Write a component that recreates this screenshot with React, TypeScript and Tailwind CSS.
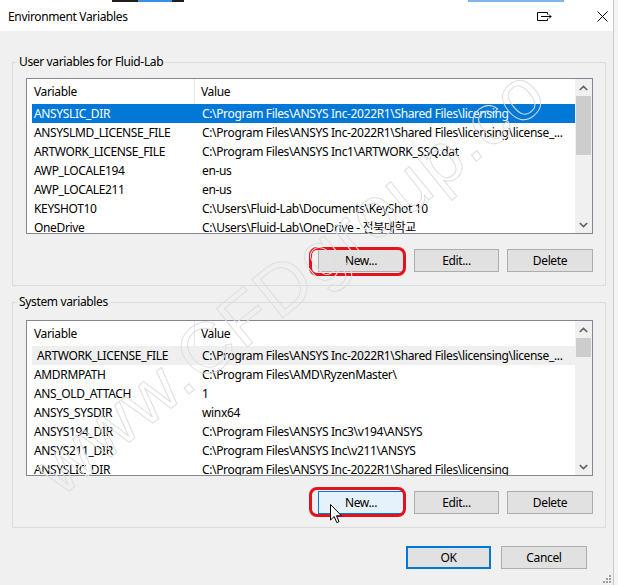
import React from "react";

type Row = { name: string; value: string };

const userRows: Row[] = [
  { name: "ANSYSLIC_DIR", value: "C:\\Program Files\\ANSYS Inc-2022R1\\Shared Files\\licensing" },
  { name: "ANSYSLMD_LICENSE_FILE", value: "C:\\Program Files\\ANSYS Inc-2022R1\\Shared Files\\licensing\\license_..." },
  { name: "ARTWORK_LICENSE_FILE", value: "C:\\Program Files\\ANSYS Inc1\\ARTWORK_SSQ.dat" },
  { name: "AWP_LOCALE194", value: "en-us" },
  { name: "AWP_LOCALE211", value: "en-us" },
  { name: "KEYSHOT10", value: "C:\\Users\\Fluid-Lab\\Documents\\KeyShot 10" },
  { name: "OneDrive", value: "C:\\Users\\Fluid-Lab\\OneDrive - 전북대학교" },
];

const systemRows: Row[] = [
  { name: "ARTWORK_LICENSE_FILE", value: "C:\\Program Files\\ANSYS Inc-2022R1\\Shared Files\\licensing\\license_..." },
  { name: "AMDRMPATH", value: "C:\\Program Files\\AMD\\RyzenMaster\\" },
  { name: "ANS_OLD_ATTACH", value: "1" },
  { name: "ANSYS_SYSDIR", value: "winx64" },
  { name: "ANSYS194_DIR", value: "C:\\Program Files\\ANSYS Inc3\\v194\\ANSYS" },
  { name: "ANSYS211_DIR", value: "C:\\Program Files\\ANSYS Inc\\v211\\ANSYS" },
  { name: "ANSYSLIC_DIR", value: "C:\\Program Files\\ANSYS Inc-2022R1\\Shared Files\\licensing" },
];

const Chevron = ({ down }: { down?: boolean }) => (
  <svg width="9" height="6" viewBox="0 0 9 6">
    <polyline
      points={down ? "0.8,1 4.5,4.6 8.2,1" : "0.8,5 4.5,1.4 8.2,5"}
      fill="none"
      stroke="#606060"
      strokeWidth="1.6"
    />
  </svg>
);

const VarList = ({
  rows,
  mode,
  thumbHeight,
}: {
  rows: Row[];
  mode: "user" | "system";
  thumbHeight: number;
}) => (
  <div className="flex h-[156px] min-w-0 border border-[#828790] bg-white">
    <div className="min-w-0 flex-1 overflow-hidden">
      <div className="flex h-[25px] items-center">
        <div className="w-[168px] shrink-0 border-r border-[#e5e5e5] pl-[7px] leading-[25px]">Variable</div>
        <div className="pl-[6px]">Value</div>
      </div>
      {rows.map((r, i) => {
        const selected = mode === "user" && i === 0;
        const focused = mode === "system" && i === 0;
        return (
          <div
            key={r.name}
            className={`ml-[5px] flex h-[19px] items-center whitespace-nowrap ${
              selected ? "bg-[#0078d7] text-white" : focused ? "bg-[#efefef]" : ""
            }`}
          >
            <div className={`w-[168px] shrink-0 ${focused ? "pl-[5px]" : "pl-[2px]"}`}>{r.name}</div>
            <div className="pl-[2px]">{r.value}</div>
          </div>
        );
      })}
    </div>
    <div className="flex w-[17px] shrink-0 flex-col bg-[#f0f0f0]">
      <div className="flex h-[17px] items-center justify-center">
        <Chevron />
      </div>
      <div className="mx-[1px] bg-[#cdcdcd]" style={{ height: thumbHeight }} />
      <div className="flex-1" />
      <div className="flex h-[17px] items-center justify-center">
        <Chevron down />
      </div>
    </div>
  </div>
);

const Btn = ({
  label,
  w,
  hover,
  isDefault,
}: {
  label: string;
  w: string;
  hover?: boolean;
  isDefault?: boolean;
}) => (
  <div
    className={`flex h-[23px] items-center justify-center ${w} ${
      hover
        ? "border border-[#0078d7] bg-[#e5f1fb]"
        : isDefault
        ? "border-2 border-[#0078d7] bg-[#e1e1e1]"
        : "border border-[#adadad] bg-[#e1e1e1]"
    }`}
  >
    {label}
  </div>
);

const Cursor = () => (
  <svg width="13" height="20" viewBox="0 0 13 20">
    <path
      d="M0.5 0.5 L0.5 16 L4.2 12.6 L6.8 18.6 L9 17.6 L6.5 11.8 L11.5 11.8 Z"
      fill="white"
      stroke="black"
      strokeWidth="1"
      strokeLinejoin="miter"
    />
  </svg>
);

const Group = ({
  title,
  rows,
  mode,
  thumbHeight,
  listTop,
  ringTop,
  ringBottom,
}: {
  title: string;
  rows: Row[];
  mode: "user" | "system";
  thumbHeight: number;
  listTop: string;
  ringTop: string;
  ringBottom: string;
}) => (
  <fieldset className="w-[594px] min-w-0 border border-[#dcdcdc] p-0">
    <legend className="ml-[4px] px-[2px] leading-[16px]">{title}</legend>
    <div className={`pl-[13px] pr-[12px] pb-[13px] ${listTop}`}>
      <VarList rows={rows} mode={mode} thumbHeight={thumbHeight} />
      <div className="mt-[15px] flex justify-end">
        <div className="relative">
          <Btn label="New..." w="w-[86px]" hover={mode === "system"} />
          <div
            className={`pointer-events-none absolute left-[-9px] right-[-2px] rounded-[8px] border-[3px] border-[#e5111b] ${ringTop} ${ringBottom}`}
          />
          {mode === "system" && (
            <div className="pointer-events-none absolute left-[12px] top-[13px]">
              <Cursor />
            </div>
          )}
        </div>
        <div className="ml-[10px]">
          <Btn label="Edit..." w="w-[85px]" />
        </div>
        <div className="ml-[8px]">
          <Btn label="Delete" w="w-[86px]" />
        </div>
      </div>
    </div>
  </fieldset>
);

export default function App() {
  return (
    <div className="flex h-[585px] w-[618px] overflow-hidden bg-white font-['Noto_Sans','Noto_Sans_CJK_KR',sans-serif] text-[12px] tracking-[-0.35px] text-black">
      <div className="relative flex w-[614px] shrink-0 flex-col border-r border-[#c8c8c8]">
        {/* strip of the window behind */}
        <div className="flex h-[2px]">
          <div className="w-[112px]" />
          <div className="w-[26px] bg-[#1f1f1f]" />
          <div className="w-[34px] bg-[#3a8ee6]" />
          <div className="w-[12px] bg-[#1f1f1f]" />
          <div className="w-[284px]" />
          <div className="w-[96px] bg-[#7fb6ec]" />
        </div>
        <div className="flex h-[29px] items-center pl-[8px]">
          <span className="flex-1">Environment Variables</span>
          <svg width="15" height="9" viewBox="0 0 15 9" className="mr-[45px]">
            <path d="M10.5 2.5 V0.5 H0.5 V8.5 H10.5 V6.5" fill="none" stroke="black" strokeWidth="1" />
            <path d="M4 4.5 H14" fill="none" stroke="black" strokeWidth="1" />
            <path d="M12 2.5 L14 4.5 L12 6.5" fill="none" stroke="black" strokeWidth="1" />
          </svg>
          <svg width="11" height="11" viewBox="0 0 11 11" className="mr-[5px]">
            <path d="M0.5 0.5 L10.5 10.5 M10.5 0.5 L0.5 10.5" stroke="black" strokeWidth="1" />
          </svg>
        </div>
        <div className="flex flex-1 flex-col bg-[#f0f0f0] pl-[12px]">
          <div className="mt-[23px]">
            <Group
              title="User variables for Fluid-Lab"
              rows={userRows}
              mode="user"
              thumbHeight={59}
              listTop="pt-[8px]"
              ringTop="top-[-2px]"
              ringBottom="bottom-[-4px]"
            />
          </div>
          <div className="mt-[8px]">
            <Group
              title="System variables"
              rows={systemRows}
              mode="system"
              thumbHeight={19}
              listTop="pt-[10px]"
              ringTop="top-[-4px]"
              ringBottom="bottom-[-3px]"
            />
          </div>
          <div className="mt-[18px] flex w-[594px] justify-end pr-[19px]">
            <Btn label="OK" w="w-[85px]" isDefault />
            <div className="ml-[10px]">
              <Btn label="Cancel" w="w-[86px]" />
            </div>
          </div>
        </div>
        {/* resize grip */}
        <div className="pointer-events-none absolute bottom-[2px] right-[2px] grid grid-cols-3 gap-[1px]">
          <div className="h-[2px] w-[2px]" />
          <div className="h-[2px] w-[2px]" />
          <div className="h-[2px] w-[2px] bg-[#a0a0a0]" />
          <div className="h-[2px] w-[2px]" />
          <div className="h-[2px] w-[2px] bg-[#a0a0a0]" />
          <div className="h-[2px] w-[2px] bg-[#a0a0a0]" />
          <div className="h-[2px] w-[2px] bg-[#a0a0a0]" />
          <div className="h-[2px] w-[2px] bg-[#a0a0a0]" />
          <div className="h-[2px] w-[2px] bg-[#a0a0a0]" />
        </div>
        {/* watermark */}
        <div className="pointer-events-none absolute left-[290px] top-[280px] -translate-x-1/2 -translate-y-1/2 -rotate-[39deg] whitespace-nowrap font-['Liberation_Sans',sans-serif] text-[72px] tracking-[2px] text-transparent [-webkit-text-stroke:1px_#dedede]">
          www.CFDgroup.co
        </div>
      </div>
      <div className="flex-1 bg-[#f4f4f4]" />
    </div>
  );
}
